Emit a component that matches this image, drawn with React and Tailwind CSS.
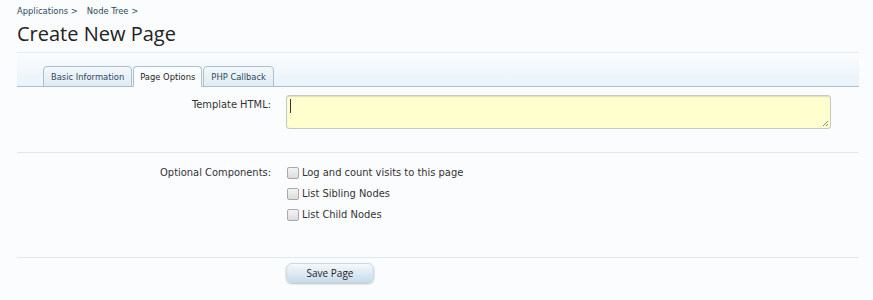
import React from "react";

const font = "font-['Tahoma','DejaVu_Sans_Condensed','Noto_Sans',sans-serif]";

const tabs = [
  { label: "Basic Information", active: false },
  { label: "Page Options", active: true },
  { label: "PHP Callback", active: false }
];

const options = ["Log and count visits to this page", "List Sibling Nodes", "List Child Nodes"];

const Checkbox = () => (
  <span className="inline-block h-[12px] w-[12px] shrink-0 rounded-[2px] border border-[#a9a9a9] bg-gradient-to-b from-[#f4f4f4] to-[#dcdcdc]" />
);

export default function App() {
  return (
    <div className={`min-h-screen bg-[#fbfcfe] pl-[17px] pr-[14px] text-[11px] text-[#333] ${font}`}>
      <div className="flex gap-[9px] pt-[4px] text-[9.3px] leading-[14px] text-[#2b485c]">
        <span>Applications &gt;</span>
        <span>Node Tree &gt;</span>
      </div>

      <h1 className="mt-[3px] font-['Open_Sans',sans-serif] text-[20px] leading-[26px] text-[#222]">
        Create New Page
      </h1>

      <div className="mt-[5px] flex h-[35px] items-end gap-px border-t border-b border-t-[#e3eef4] border-b-[#a9c1d1] bg-gradient-to-b from-[#fbfcfe] to-[#e9f3f9] pl-[26px]">
        {tabs.map((tab) => (
          <div
            key={tab.label}
            className={`-mb-px flex h-[21px] items-center rounded-t-[4px] border border-[#a9c1d1] text-[9.3px] ${
              tab.active
                ? "border-b-[#fbfcfe] bg-[#fbfcfe] px-[6px] text-[#222]"
                : "bg-gradient-to-b from-[#f3f8fb] to-[#dfebf3] px-[7px] text-[#2b485c]"
            }`}
          >
            {tab.label}
          </div>
        ))}
      </div>

      <div className="grid grid-cols-[254px_1fr] gap-x-[15px] pt-[8px] pb-[23px] pr-[28px]">
        <label className="pt-[2px] text-right text-[#333]">Template HTML:</label>
        <div className="relative h-[34px] rounded-[3px] border border-[#c8c8c8] bg-[#fefecf] shadow-[inset_0_1px_1px_rgba(0,0,0,0.12)]">
          <span className="absolute left-[3px] top-[3px] h-[14px] w-px bg-[#333]" />
          <svg className="absolute bottom-[1px] right-[1px]" width="7" height="7" viewBox="0 0 7 7">
            <path d="M6 1 L1 6 M6 4 L4 6" stroke="#888" strokeWidth="1" />
          </svg>
        </div>
      </div>

      <div className="grid grid-cols-[254px_1fr] gap-x-[15px] border-t border-[#dfeaf0] pt-[12px] pb-[34px]">
        <label className="text-right leading-[16px] text-[#333]">Optional Components:</label>
        <div className="flex flex-col gap-[5px] pl-[1px]">
          {options.map((o) => (
            <label key={o} className="flex items-center gap-[2px] leading-[16px]">
              <Checkbox />
              <span className="ml-[1px]">{o}</span>
            </label>
          ))}
        </div>
      </div>

      <div className="grid grid-cols-[254px_1fr] gap-x-[15px] border-t border-[#dfeaf0] pt-[5px] pb-[15px]">
        <span />
        <div>
          <button
            type="button"
            className="h-[20px] w-[88px] rounded-[6px] border border-[#c9d9e4] bg-gradient-to-b from-[#f6f9fc] to-[#c6dbeb] font-['Open_Sans',sans-serif] text-[10px] text-[#222] shadow-[0_1px_2px_rgba(0,0,0,0.25)]"
          >
            Save Page
          </button>
        </div>
      </div>
    </div>
  );
}
